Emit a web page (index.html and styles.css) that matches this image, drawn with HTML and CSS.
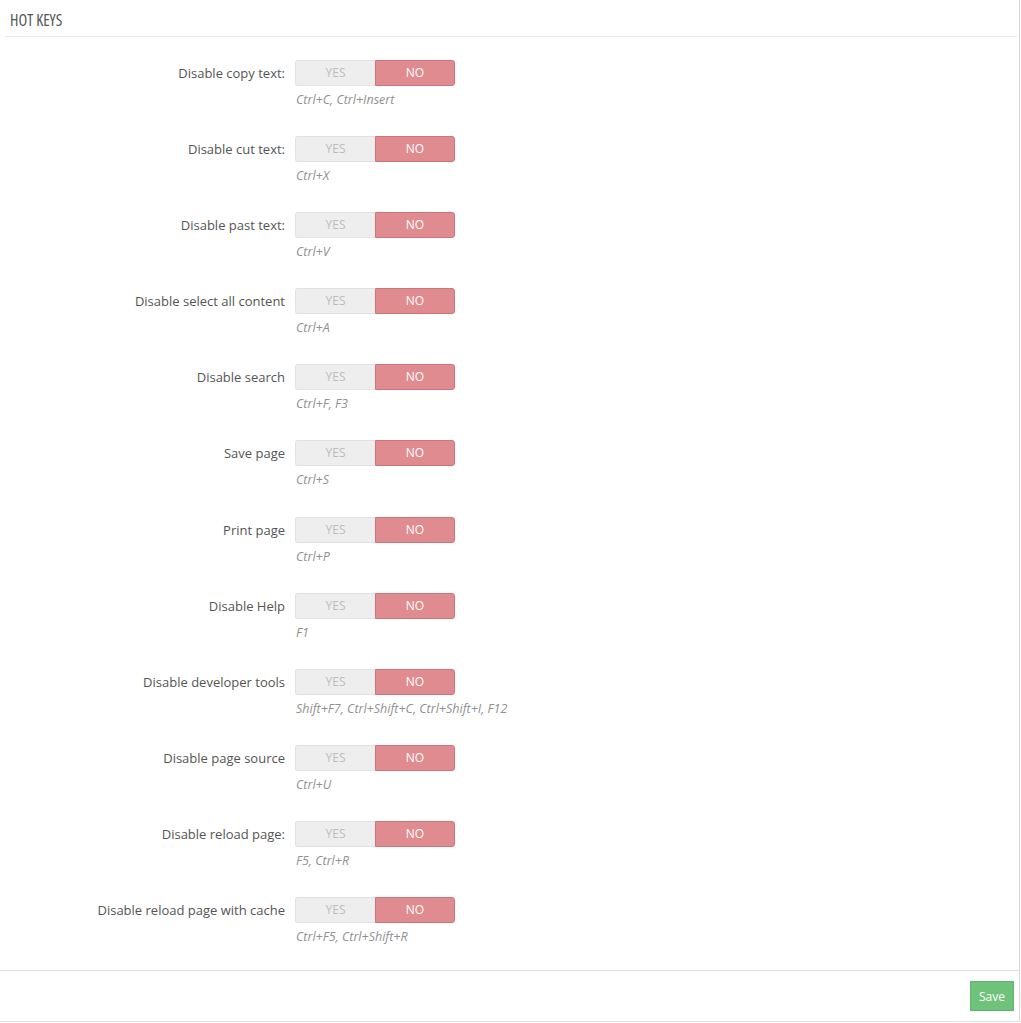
FILE: index.html
```html
<!DOCTYPE html>
<html>
<head>
<meta charset="utf-8">
<link rel="stylesheet" href="styles.css">
</head>
<body>
<div class="panel">
  <div class="panel-heading">HOT KEYS</div>
  <div class="panel-body">
    <div class="row"><div class="label">Disable copy text:</div><div class="ctl"><div class="toggle"><span class="yes">YES</span><span class="no">NO</span></div><div class="hint">Ctrl+C, Ctrl+Insert</div></div></div>
    <div class="row"><div class="label">Disable cut text:</div><div class="ctl"><div class="toggle"><span class="yes">YES</span><span class="no">NO</span></div><div class="hint">Ctrl+X</div></div></div>
    <div class="row"><div class="label">Disable past text:</div><div class="ctl"><div class="toggle"><span class="yes">YES</span><span class="no">NO</span></div><div class="hint">Ctrl+V</div></div></div>
    <div class="row"><div class="label">Disable select all content</div><div class="ctl"><div class="toggle"><span class="yes">YES</span><span class="no">NO</span></div><div class="hint">Ctrl+A</div></div></div>
    <div class="row"><div class="label">Disable search</div><div class="ctl"><div class="toggle"><span class="yes">YES</span><span class="no">NO</span></div><div class="hint">Ctrl+F, F3</div></div></div>
    <div class="row"><div class="label">Save page</div><div class="ctl"><div class="toggle"><span class="yes">YES</span><span class="no">NO</span></div><div class="hint">Ctrl+S</div></div></div>
    <div class="row"><div class="label">Print page</div><div class="ctl"><div class="toggle"><span class="yes">YES</span><span class="no">NO</span></div><div class="hint">Ctrl+P</div></div></div>
    <div class="row"><div class="label">Disable Help</div><div class="ctl"><div class="toggle"><span class="yes">YES</span><span class="no">NO</span></div><div class="hint">F1</div></div></div>
    <div class="row"><div class="label">Disable developer tools</div><div class="ctl"><div class="toggle"><span class="yes">YES</span><span class="no">NO</span></div><div class="hint">Shift+F7, Ctrl+Shift+C, Ctrl+Shift+I, F12</div></div></div>
    <div class="row"><div class="label">Disable page source</div><div class="ctl"><div class="toggle"><span class="yes">YES</span><span class="no">NO</span></div><div class="hint">Ctrl+U</div></div></div>
    <div class="row"><div class="label">Disable reload page:</div><div class="ctl"><div class="toggle"><span class="yes">YES</span><span class="no">NO</span></div><div class="hint">F5, Ctrl+R</div></div></div>
    <div class="row"><div class="label">Disable reload page with cache</div><div class="ctl"><div class="toggle"><span class="yes">YES</span><span class="no">NO</span></div><div class="hint">Ctrl+F5, Ctrl+Shift+R</div></div></div>
  </div>
  <div class="panel-footer"><button class="btn-save">Save</button></div>
</div>
</body>
</html>
```
FILE: styles.css
```css
html, body {
  margin: 0;
  padding: 0;
  background: #fff;
}
body {
  font-family: "Open Sans", "Liberation Sans", sans-serif;
  font-size: 13px;
  color: #555;
}
.panel {
  width: 1019px;
  border-right: 1px solid #d9d9d9;
  border-bottom: 1px solid #e0e0e0;
}
.panel-heading {
  margin-left: 5px;
  margin-right: 2px;
  padding-left: 5px;
  height: 36px;
  line-height: 41px;
  border-bottom: 1px solid #e9e9e9;
  font-family: "Open Sans", "Liberation Sans Narrow", sans-serif;
  font-stretch: 75%;
  font-weight: 500;
  font-size: 16px;
  color: #555;
  letter-spacing: 0;
}
.panel-body {
  padding: 23px 0 25px 0;
}
.row {
  display: grid;
  grid-template-columns: 285px auto;
  column-gap: 10px;
  margin-bottom: 28.1px;
}
.row:last-child {
  margin-bottom: 0;
}
.label {
  text-align: right;
  line-height: 26px;
  font-size: 13px;
  color: #555;
}
.toggle {
  display: flex;
  width: 160px;
  height: 26px;
}
.toggle span {
  box-sizing: border-box;
  width: 80px;
  height: 26px;
  line-height: 24px;
  text-align: center;
  font-size: 12px;
}
.yes {
  background: #eeeeee;
  border: 1px solid #e2e2e2;
  border-right: none;
  border-radius: 3px 0 0 3px;
  color: #bdbdbd;
}
.no {
  background: #e08b90;
  border: 1px solid #d2737a;
  border-radius: 0 3px 3px 0;
  color: #fff;
}
.hint {
  margin-top: 5px;
  padding-left: 1px;
  line-height: 17px;
  font-size: 12.5px;
  font-style: italic;
  color: #909090;
}
.panel-footer {
  border-top: 1px solid #dedede;
  padding: 10px 5px 10px 0;
  display: flex;
  justify-content: flex-end;
}
.btn-save {
  height: 30px;
  width: 44px;
  padding: 0;
  background: #6fc27a;
  border: 1px solid #62b46d;
  color: #fff;
  font-family: "Open Sans", "Liberation Sans", sans-serif;
  font-size: 12px;
  border-radius: 0;
}
```
